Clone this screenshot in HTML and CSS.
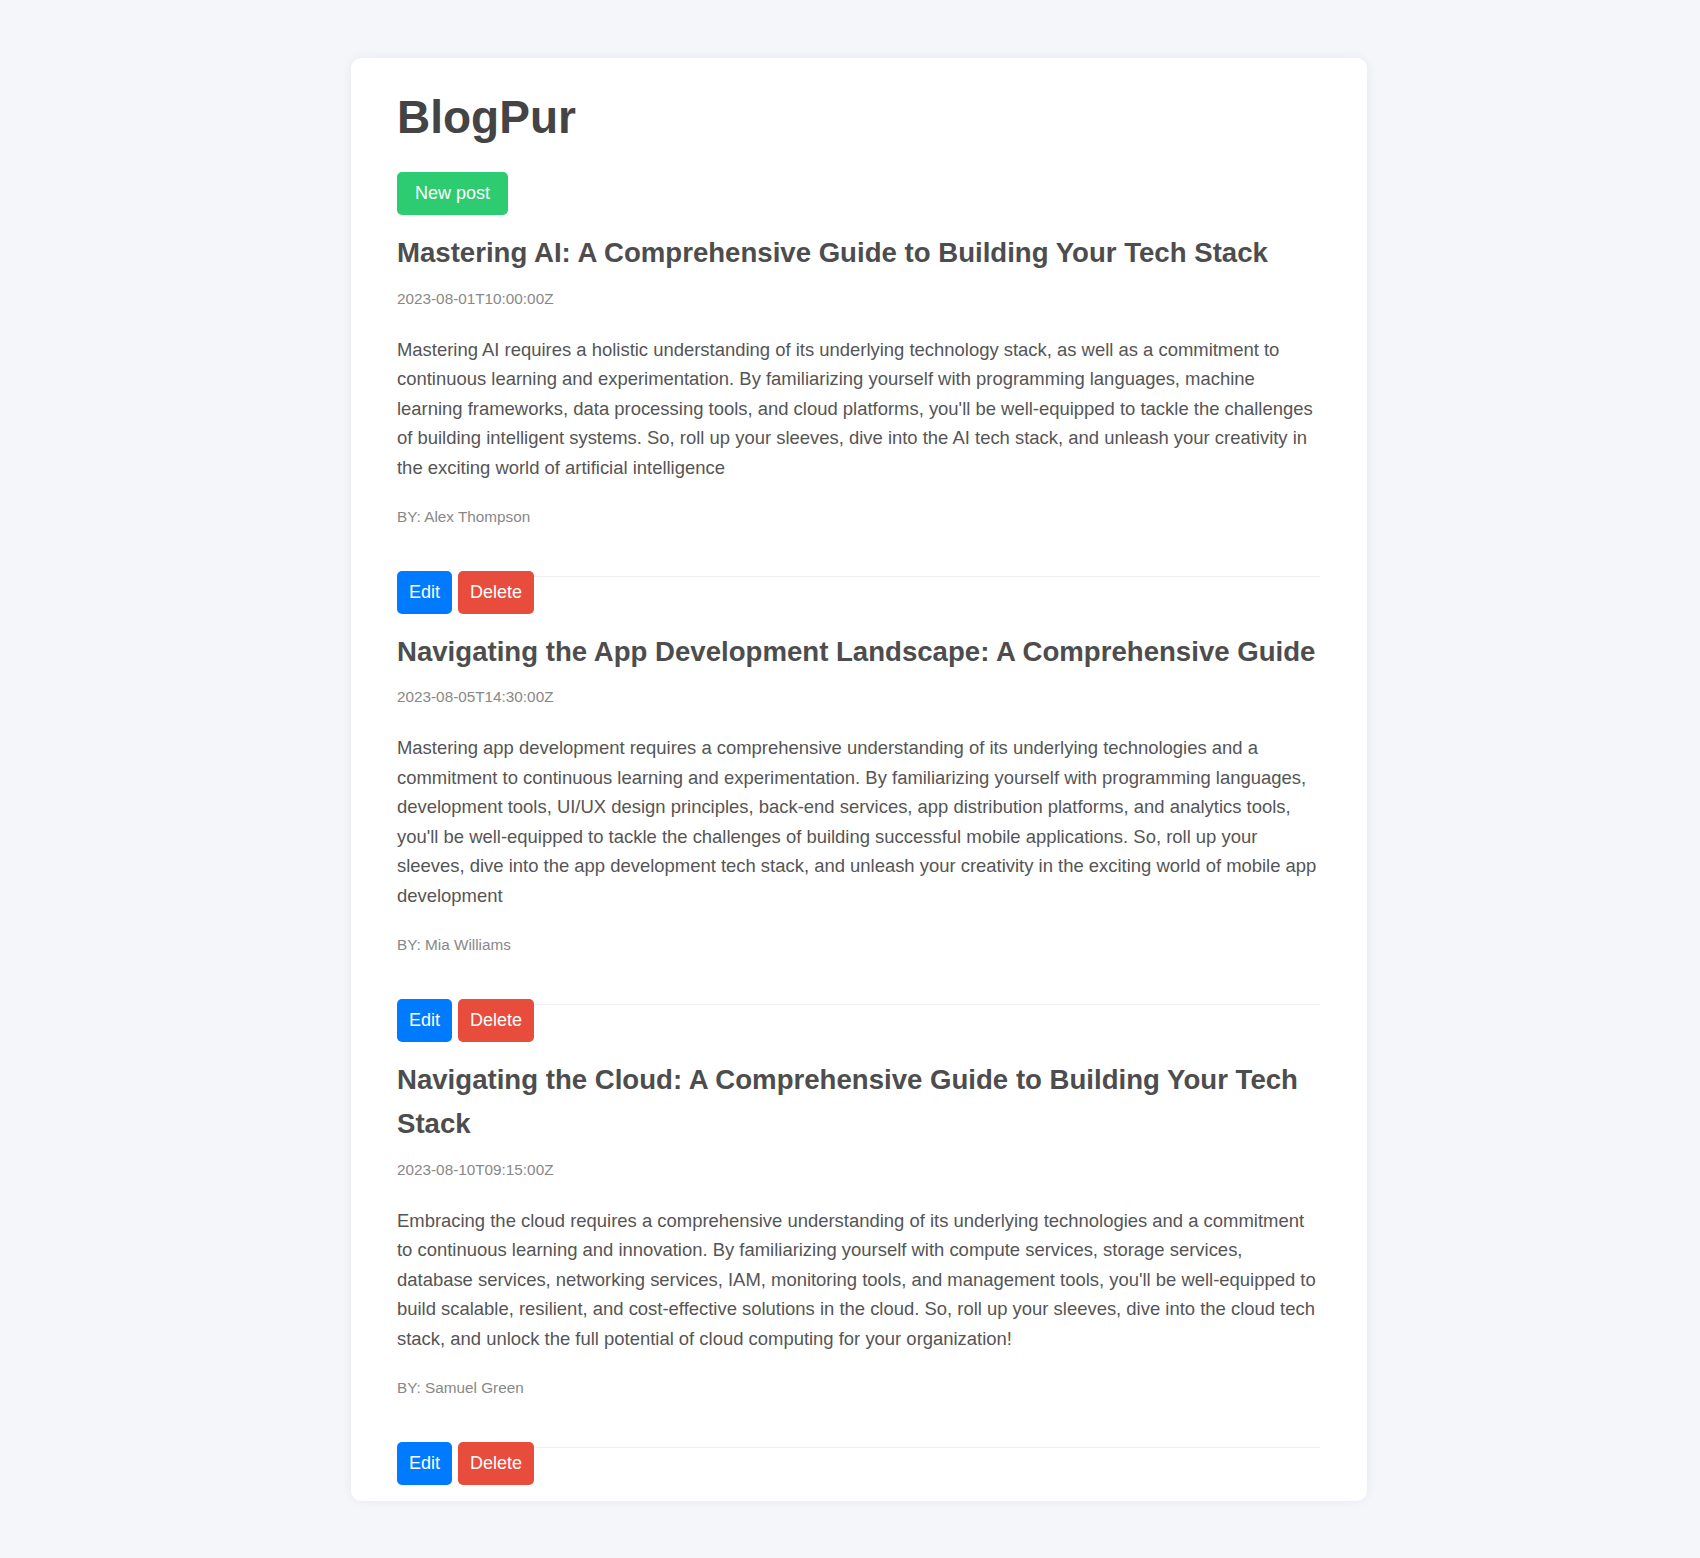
FILE: index.html
```html
<!DOCTYPE html>
<html lang="en">
<head>
<meta charset="utf-8">
<title>BlogPur</title>
<link rel="stylesheet" href="styles.css">
</head>
<body>
<main class="card">
  <h1 class="brand">BlogPur</h1>
  <button class="btn btn-new">New post</button>

  <article class="post">
    <h2 class="post-title">Mastering AI: A Comprehensive Guide to Building Your Tech Stack</h2>
    <div class="post-date">2023-08-01T10:00:00Z</div>
    <p class="post-body">Mastering AI requires a holistic understanding of its underlying technology stack, as well as a commitment to continuous learning and experimentation. By familiarizing yourself with programming languages, machine learning frameworks, data processing tools, and cloud platforms, you'll be well-equipped to tackle the challenges of building intelligent systems. So, roll up your sleeves, dive into the AI tech stack, and unleash your creativity in the exciting world of artificial intelligence</p>
    <div class="post-author">BY: Alex Thompson</div>
    <div class="post-actions">
      <button class="btn btn-edit">Edit</button>
      <button class="btn btn-delete">Delete</button>
      <span class="rule"></span>
    </div>
  </article>

  <article class="post">
    <h2 class="post-title">Navigating the App Development Landscape: A Comprehensive Guide</h2>
    <div class="post-date">2023-08-05T14:30:00Z</div>
    <p class="post-body">Mastering app development requires a comprehensive understanding of its underlying technologies and a commitment to continuous learning and experimentation. By familiarizing yourself with programming languages, development tools, UI/UX design principles, back-end services, app distribution platforms, and analytics tools, you'll be well-equipped to tackle the challenges of building successful mobile applications. So, roll up your sleeves, dive into the app development tech stack, and unleash your creativity in the exciting world of mobile app development</p>
    <div class="post-author">BY: Mia Williams</div>
    <div class="post-actions">
      <button class="btn btn-edit">Edit</button>
      <button class="btn btn-delete">Delete</button>
      <span class="rule"></span>
    </div>
  </article>

  <article class="post">
    <h2 class="post-title">Navigating the Cloud: A Comprehensive Guide to Building Your Tech Stack</h2>
    <div class="post-date">2023-08-10T09:15:00Z</div>
    <p class="post-body">Embracing the cloud requires a comprehensive understanding of its underlying technologies and a commitment to continuous learning and innovation. By familiarizing yourself with compute services, storage services, database services, networking services, IAM, monitoring tools, and management tools, you'll be well-equipped to build scalable, resilient, and cost-effective solutions in the cloud. So, roll up your sleeves, dive into the cloud tech stack, and unlock the full potential of cloud computing for your organization!</p>
    <div class="post-author">BY: Samuel Green</div>
    <div class="post-actions">
      <button class="btn btn-edit">Edit</button>
      <button class="btn btn-delete">Delete</button>
      <span class="rule"></span>
    </div>
  </article>
</main>
</body>
</html>
```

FILE: styles.css
```css
html, body {
  margin: 0;
  padding: 0;
  background: #f5f6fa;
}

body {
  font-family: "Liberation Sans", Arial, sans-serif;
  font-size: 18px;
  line-height: 1.6;
  color: #555;
  padding: 58px 0 50px;
}

.card {
  display: block;
  box-sizing: border-box;
  width: 1016px;
  margin-left: 351px;
  padding: 32px 47px 16px 46px;
  background: #fff;
  border-radius: 10px;
  box-shadow: 0 0 12px rgba(20, 30, 60, 0.06);
}

.brand {
  margin: 0 0 27px;
  font-size: 46px;
  line-height: 1.2;
  font-weight: 700;
  color: #444;
}

.btn {
  display: inline-block;
  font-family: inherit;
  font-size: 18px;
  line-height: 1.6;
  border: 0;
  border-radius: 5px;
  color: #fff;
  cursor: pointer;
  padding: 7.2px 12px;
}

.btn-new {
  background: #2ecc71;
  padding: 7.2px 18px;
  margin-bottom: 16px;
}

.btn-edit { background: #007bff; }
.btn-delete { background: #e74c3c; }

.post-title {
  margin: 0 0 11.2px;
  font-size: 27.6px;
  line-height: 1.6;
  font-weight: 700;
  color: #4d4d4d;
}

.post-date {
  font-size: 15.3px;
  color: #888;
}

.post-body {
  margin: 23.5px 0 23px;
  font-size: 18.45px;
  line-height: 29.5px;
  color: #555;
}

.post-author {
  font-size: 15.3px;
  color: #888;
}

.post-actions {
  display: flex;
  align-items: flex-start;
  gap: 6px;
  margin-top: 41px;
  margin-bottom: 16.2px;
}

.post:last-child .post-actions {
  margin-bottom: 0;
}

.rule {
  flex: 1;
  height: 1px;
  margin-top: 5px;
  margin-left: -6px;
  background: #f0f0f0;
}
```
